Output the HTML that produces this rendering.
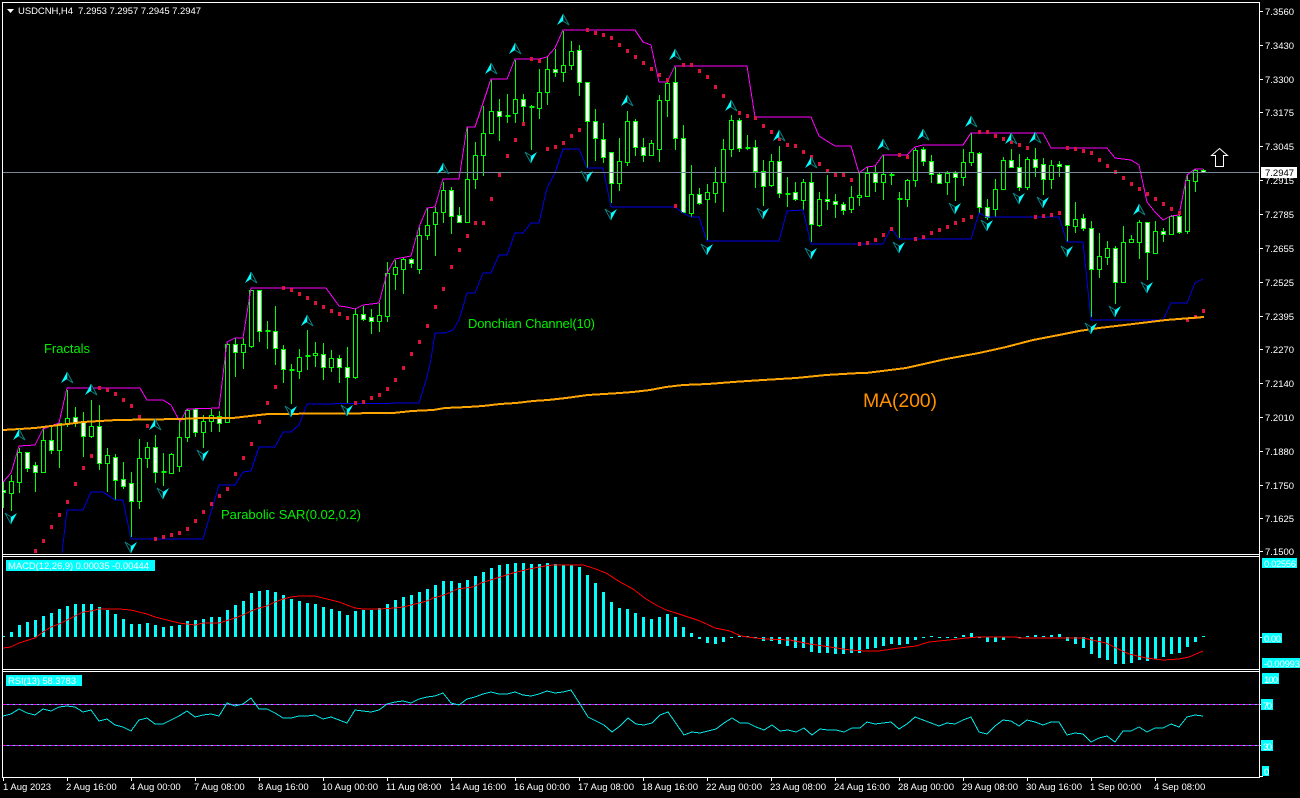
<!DOCTYPE html>
<html><head><meta charset="utf-8"><title>USDCNH,H4</title>
<style>
html,body{margin:0;padding:0;background:#000;width:1300px;height:798px;overflow:hidden}
svg{display:block;position:absolute;left:0;top:0}
text{font-family:"Liberation Sans",sans-serif;fill:#fff;font-size:9.5px;white-space:pre}
.g{fill:#00f000;font-size:13px}
.a{font-size:9.4px}
.l path,.l polyline,.l line{shape-rendering:crispEdges}
polyline{fill:none}
</style></head><body>
<svg width="1300" height="798" viewBox="0 0 1300 798" xmlns="http://www.w3.org/2000/svg">
<defs>
<clipPath id="m"><rect x="3" y="3" width="1256" height="551"/></clipPath>
<g id="u"><path d="M0 -6L6 5L0 1Z" fill="#000" stroke="#0b7f7f" stroke-width="1"/><path d="M0 -6L-6 5L0 1Z" fill="#00ffff"/></g>
<g id="d"><path d="M0 6L-6 -5L0 -1Z" fill="#000" stroke="#0b7f7f" stroke-width="1"/><path d="M0 6L6 -5L0 -1Z" fill="#00ffff"/></g>
</defs>
<rect width="1300" height="798" fill="#000"/>
<g class="l">
<g clip-path="url(#m)">
<!-- wicks -->
<path stroke="#00ff00" fill="none" d="M3.5 482V508M11.5 475V511M19.5 448V493M27.5 452V472M35.5 462V492M43.5 428V473M51.5 427V454M59.5 423V468M67.5 390V427M75.5 407V427M83.5 412V457M91.5 400V438M99.5 405V470M107.5 448V492M115.5 454V500M123.5 462V489M131.5 472V537M139.5 439V509M147.5 442V468M155.5 435V483M163.5 453V486M171.5 453V473M179.5 420V472M187.5 409V442M195.5 408V437M203.5 415V448M211.5 409V432M219.5 411V432M227.5 343V422M235.5 338V377M243.5 338V369M251.5 290V348M259.5 290V342M267.5 321V349M275.5 306V365M283.5 345V383M291.5 364V404M299.5 349V379M307.5 330V370M315.5 342V367M323.5 343V380M331.5 350V372M339.5 355V383M347.5 347V403M355.5 308V379M363.5 306V321M371.5 309V334M379.5 303V332M387.5 262V322M395.5 260V290M403.5 257V294M411.5 258V268M419.5 227V274M427.5 208V240M435.5 207V256M443.5 182V223M451.5 187V234M459.5 207V223M467.5 127V223M475.5 142V189M483.5 106V176M491.5 80V133M499.5 99V141M507.5 94V123M515.5 60V123M523.5 94V123M531.5 105V150M539.5 69V119M547.5 57V105M555.5 49V77M563.5 31V82M571.5 41V70M579.5 45V96M587.5 82V168M595.5 109V161M603.5 123V163M611.5 152V203M619.5 138V191M627.5 111V166M635.5 119V156M643.5 138V162M651.5 140V155M659.5 95V162M667.5 78V117M675.5 67V150M683.5 125V213M691.5 165V217M699.5 188V205M707.5 184V240M715.5 167V203M723.5 139V212M731.5 115V157M739.5 118V152M747.5 135V150M755.5 140V188M763.5 160V206M771.5 154V187M779.5 146V198M787.5 177V207M795.5 182V201M803.5 179V210M811.5 173V242M819.5 192V227M827.5 175V210M835.5 194V218M843.5 202V215M851.5 186V213M859.5 173V206M867.5 167V197M875.5 166V192M883.5 155V200M891.5 173V185M899.5 192V238M907.5 179V207M915.5 148V187M923.5 147V166M931.5 155V183M939.5 172V183M947.5 171V195M955.5 171V201M963.5 149V186M971.5 133V166M979.5 152V213M987.5 199V220M995.5 179V217M1003.5 157V190M1011.5 149V167M1019.5 154V191M1027.5 157V190M1035.5 148V177M1043.5 158V195M1051.5 160V189M1059.5 161V177M1067.5 165V242M1075.5 202V233M1083.5 214V231M1091.5 221V317M1099.5 233V278M1107.5 241V265M1115.5 246V304M1123.5 226V282M1131.5 235V243M1139.5 220V259M1147.5 222V280M1155.5 221V254M1163.5 228V242M1171.5 215V235M1179.5 215V234M1187.5 175V234M1195.5 169V192M1203.5 169V173"/>
<!-- dojis -->
<path stroke="#00ff00" stroke-width="2" fill="none" d="M161.5 472h5M265.5 331h5M289.5 370h5M305.5 356h5M505.5 116h5M529.5 107h5M745.5 148h5M785.5 194h5M889.5 175h5M897.5 199h5"/>
<!-- hollow -->
<path stroke="#00ff00" fill="#000" d="M9.5 481.5h4v12h-4zM17.5 452.5h4v30h-4zM41.5 440.5h4v32h-4zM57.5 423.5h4v27h-4zM65.5 418.5h4v6h-4zM89.5 426.5h4v10h-4zM105.5 455.5h4v8h-4zM137.5 458.5h4v43h-4zM145.5 447.5h4v11h-4zM169.5 454.5h4v19h-4zM177.5 437.5h4v29h-4zM185.5 410.5h4v27h-4zM201.5 421.5h4v11h-4zM209.5 415.5h4v6h-4zM225.5 344.5h4v78h-4zM241.5 344.5h4v8h-4zM249.5 290.5h4v56h-4zM297.5 357.5h4v14h-4zM313.5 353.5h4v2h-4zM329.5 358.5h4v9h-4zM353.5 314.5h4v63h-4zM377.5 315.5h4v6h-4zM385.5 273.5h4v43h-4zM393.5 267.5h4v7h-4zM401.5 259.5h4v10h-4zM417.5 235.5h4v34h-4zM425.5 225.5h4v10h-4zM433.5 212.5h4v12h-4zM441.5 190.5h4v22h-4zM465.5 179.5h4v43h-4zM473.5 155.5h4v24h-4zM481.5 133.5h4v22h-4zM489.5 111.5h4v22h-4zM513.5 99.5h4v14h-4zM537.5 92.5h4v16h-4zM545.5 69.5h4v23h-4zM561.5 65.5h4v7h-4zM569.5 51.5h4v14h-4zM617.5 161.5h4v22h-4zM625.5 121.5h4v41h-4zM649.5 143.5h4v12h-4zM657.5 100.5h4v49h-4zM665.5 83.5h4v17h-4zM689.5 194.5h4v19h-4zM705.5 192.5h4v7h-4zM713.5 182.5h4v11h-4zM721.5 149.5h4v33h-4zM729.5 120.5h4v29h-4zM769.5 161.5h4v24h-4zM801.5 182.5h4v18h-4zM817.5 199.5h4v26h-4zM849.5 197.5h4v12h-4zM857.5 195.5h4v2h-4zM865.5 173.5h4v23h-4zM881.5 174.5h4v8h-4zM905.5 180.5h4v19h-4zM913.5 150.5h4v30h-4zM945.5 173.5h4v9h-4zM961.5 162.5h4v15h-4zM969.5 152.5h4v10h-4zM993.5 189.5h4v20h-4zM1001.5 160.5h4v29h-4zM1025.5 159.5h4v28h-4zM1049.5 165.5h4v14h-4zM1073.5 219.5h4v7h-4zM1097.5 256.5h4v13h-4zM1105.5 248.5h4v9h-4zM1121.5 242.5h4v40h-4zM1129.5 239.5h4v3h-4zM1137.5 222.5h4v20h-4zM1153.5 231.5h4v22h-4zM1169.5 216.5h4v18h-4zM1185.5 180.5h4v51h-4zM1193.5 170.5h4v11h-4z"/>
<!-- filled -->
<path stroke="#00ff00" fill="#fff" d="M1.5 490.5h4v2h-4zM25.5 452.5h4v16h-4zM33.5 465.5h4v7h-4zM49.5 440.5h4v10h-4zM73.5 417.5h4v6h-4zM81.5 422.5h4v14h-4zM97.5 426.5h4v37h-4zM113.5 457.5h4v23h-4zM121.5 479.5h4v7h-4zM129.5 483.5h4v18h-4zM153.5 447.5h4v25h-4zM193.5 409.5h4v23h-4zM217.5 416.5h4v7h-4zM233.5 344.5h4v8h-4zM257.5 290.5h4v41h-4zM273.5 331.5h4v17h-4zM281.5 349.5h4v20h-4zM321.5 354.5h4v13h-4zM337.5 358.5h4v9h-4zM345.5 367.5h4v10h-4zM361.5 314.5h4v5h-4zM369.5 317.5h4v4h-4zM409.5 259.5h4v4h-4zM449.5 190.5h4v26h-4zM457.5 215.5h4v7h-4zM497.5 111.5h4v5h-4zM521.5 99.5h4v7h-4zM553.5 69.5h4v3h-4zM577.5 50.5h4v32h-4zM585.5 82.5h4v39h-4zM593.5 121.5h4v17h-4zM601.5 139.5h4v18h-4zM609.5 152.5h4v31h-4zM633.5 121.5h4v26h-4zM641.5 147.5h4v8h-4zM673.5 82.5h4v56h-4zM681.5 138.5h4v74h-4zM697.5 194.5h4v9h-4zM737.5 120.5h4v28h-4zM753.5 147.5h4v24h-4zM761.5 171.5h4v15h-4zM777.5 161.5h4v32h-4zM793.5 192.5h4v7h-4zM809.5 182.5h4v42h-4zM825.5 199.5h4v2h-4zM833.5 201.5h4v3h-4zM841.5 204.5h4v6h-4zM873.5 173.5h4v9h-4zM921.5 149.5h4v12h-4zM929.5 161.5h4v13h-4zM937.5 174.5h4v9h-4zM953.5 173.5h4v4h-4zM977.5 153.5h4v54h-4zM985.5 207.5h4v10h-4zM1009.5 160.5h4v7h-4zM1017.5 167.5h4v20h-4zM1033.5 159.5h4v8h-4zM1041.5 164.5h4v15h-4zM1057.5 164.5h4v2h-4zM1065.5 165.5h4v60h-4zM1081.5 218.5h4v10h-4zM1089.5 228.5h4v41h-4zM1113.5 248.5h4v34h-4zM1145.5 222.5h4v30h-4zM1161.5 231.5h4v3h-4zM1177.5 216.5h4v16h-4zM1201.5 170.5h4v2h-4z"/>
<!-- donchian lower -->
<polyline stroke="#0000e6" points="62,553 67,510 83,510 91,492 103,492 115,500 123,500 131,539 203,539 219,485 235,485 243,472 251,471 259,447 275,447 283,432 291,432 299,425 307,404 419,403 427,377 431,359 435,333 445,333 453,330 459,320 467,293 475,293 483,273 491,273 499,255 507,255 515,233 523,233 531,223 539,223 547,188 555,173 563,149 579,149 587,168 603,168 611,207 675,207 683,213 691,217 699,217 707,241 779,241 787,211 803,210 811,244 883,244 891,228 899,239 971,239 979,213 987,217 1059,217 1067,242 1083,242 1091,320 1163,320 1171,303 1187,303 1195,283 1203,279"/>
<!-- donchian upper -->
<polyline stroke="#ff00ff" points="3,482 11,473 19,446 35,445 43,429 51,426 59,423 67,388 140,388 147,400 163,400 171,405 180,422 187,409 219,408 227,342 235,338 243,338 251,288 326,288 339,306 347,307 355,309 363,305 379,303 387,273 395,259 411,256 419,227 427,208 435,207 443,179 459,179 467,127 475,127 491,79 507,79 515,59 539,59 547,57 555,48 563,30 635,30 643,42 651,45 659,82 667,82 675,66 747,66 755,117 803,117 811,117 819,136 835,146 851,146 859,173 867,167 875,166 883,155 907,155 915,147 923,145 963,145 971,133 1043,133 1051,148 1107,148 1115,158 1131,160 1139,165 1147,202 1155,212 1163,220 1171,216 1179,215 1187,175 1195,169 1203,169"/>
<!-- SAR -->
<path stroke="#dc143c" stroke-width="3" fill="none" d="M35.5 549v4M43.5 539v4M51.5 525v4M59.5 513v4M67.5 500v4M75.5 482v4M83.5 466v4M91.5 454v4M99.5 386v4M107.5 388v4M115.5 392v4M123.5 398v4M131.5 404v4M139.5 415v4M147.5 424v4M155.5 537v4M163.5 535v4M171.5 533v4M179.5 531v4M187.5 527v4M195.5 519v4M203.5 510v4M211.5 502v4M219.5 494v4M227.5 487v4M235.5 472v4M243.5 456v4M251.5 442v4M259.5 420v4M267.5 401v4M275.5 385v4M283.5 286v4M291.5 288v4M299.5 292v4M307.5 296v4M315.5 301v4M323.5 305v4M331.5 309v4M339.5 312v4M347.5 316v4M355.5 401v4M363.5 400v4M371.5 396v4M379.5 393v4M387.5 387v4M395.5 378v4M403.5 366v4M411.5 352v4M419.5 340v4M427.5 324v4M435.5 305v4M443.5 287v4M451.5 265v4M459.5 248v4M467.5 234v4M475.5 221v4M483.5 221v4M491.5 197v4M499.5 173v4M507.5 154v4M515.5 138v4M523.5 122v4M531.5 57v4M539.5 59v4M547.5 147v4M555.5 145v4M563.5 141v4M571.5 134v4M579.5 128v4M587.5 28v4M595.5 31v4M603.5 33v4M611.5 36v4M619.5 43v4M627.5 49v4M635.5 55v4M643.5 61v4M651.5 67v4M659.5 73v4M667.5 78v4M675.5 204v4M683.5 63v4M691.5 63v4M699.5 69v4M707.5 75v4M715.5 85v4M723.5 94v4M731.5 103v4M739.5 111v4M747.5 114v4M755.5 116v4M763.5 124v4M771.5 130v4M779.5 137v4M787.5 143v4M795.5 144v4M803.5 150v4M811.5 155v4M819.5 162v4M827.5 169v4M835.5 173v4M843.5 173v4M851.5 178v4M859.5 242v4M867.5 241v4M875.5 238v4M883.5 233v4M891.5 227v4M899.5 153v4M907.5 155v4M915.5 237v4M923.5 235v4M931.5 231v4M939.5 228v4M947.5 225v4M955.5 221v4M963.5 218v4M971.5 215v4M979.5 130v4M987.5 130v4M995.5 134v4M1003.5 137v4M1011.5 140v4M1019.5 143v4M1027.5 146v4M1035.5 215v4M1043.5 214v4M1051.5 213v4M1059.5 211v4M1067.5 146v4M1075.5 147v4M1083.5 149v4M1091.5 151v4M1099.5 158v4M1107.5 164v4M1115.5 170v4M1123.5 176v4M1131.5 182v4M1139.5 187v4M1147.5 192v4M1155.5 197v4M1163.5 202v4M1171.5 207v4M1179.5 211v4M1187.5 318v4M1195.5 315v4M1203.5 309v4"/>
<!-- MA -->
<polyline stroke="#ffa500" stroke-width="2" points="3,430 20,429 35,428 51,426 67,424 83,422 100,421 117,420 180,419 203,418 233,418 250,416 268,414 393,413 412,411 433,410 445,408 468,407 483,406 500,404 516,403 533,401 548,400 566,398 588,395 620,393 633,392 650,390 666,387 683,385 708,384 733,382 763,380 796,378 826,375 860,373 866,373 906,368 946,359 979,353 1006,347 1033,340 1059,335 1079,331 1099,328 1133,324 1166,320 1204,317"/>
<!-- current price line -->
<line x1="3" y1="172.5" x2="1259" y2="172.5" stroke="#778899"/>
</g>
</g>
<!-- fractals -->
<g clip-path="url(#m)">
<use href="#u" x="19" y="435"/><use href="#u" x="67" y="378"/><use href="#u" x="91" y="390"/><use href="#u" x="155" y="425"/><use href="#u" x="251" y="278"/><use href="#u" x="307" y="321"/><use href="#u" x="443" y="169"/><use href="#u" x="491" y="69"/><use href="#u" x="515" y="49"/><use href="#u" x="563" y="20"/><use href="#u" x="627" y="101"/><use href="#u" x="675" y="55"/><use href="#u" x="731" y="106"/><use href="#u" x="779" y="136"/><use href="#u" x="811" y="163"/><use href="#u" x="883" y="145"/><use href="#u" x="923" y="135"/><use href="#u" x="971" y="122"/><use href="#u" x="1011" y="139"/><use href="#u" x="1035" y="138"/><use href="#u" x="1139" y="210"/>
<use href="#d" x="11" y="518"/><use href="#d" x="131" y="547"/><use href="#d" x="163" y="493"/><use href="#d" x="203" y="455"/><use href="#d" x="291" y="411"/><use href="#d" x="347" y="410"/><use href="#d" x="531" y="157"/><use href="#d" x="587" y="176"/><use href="#d" x="611" y="214"/><use href="#d" x="707" y="249"/><use href="#d" x="763" y="213"/><use href="#d" x="811" y="253"/><use href="#d" x="899" y="247"/><use href="#d" x="955" y="208"/><use href="#d" x="987" y="225"/><use href="#d" x="1019" y="198"/><use href="#d" x="1043" y="202"/><use href="#d" x="1067" y="251"/><use href="#d" x="1091" y="328"/><use href="#d" x="1115" y="311"/><use href="#d" x="1147" y="287"/>
</g>
<!-- big arrow -->
<path d="M1219.5 148.5L1227.5 155.5H1223.5V166.5H1215.5V155.5H1211.5Z" fill="#000" stroke="#fff"/>
<g class="l">
<!-- MACD hist -->
<path stroke="#00ffff" stroke-width="3" fill="none" d="M3.5 636V637M11.5 632V637M19.5 625V637M27.5 622V637M35.5 620V637M43.5 616V637M51.5 613V637M59.5 609V637M67.5 606V637M75.5 604V637M83.5 604V637M91.5 604V637M99.5 607V637M107.5 610V637M115.5 614V637M123.5 619V637M131.5 624V637M139.5 624V637M147.5 623V637M155.5 625V637M163.5 627V637M171.5 626V637M179.5 625V637M187.5 621V637M195.5 620V637M203.5 619V637M211.5 617V637M219.5 617V637M227.5 610V637M235.5 605V637M243.5 601V637M251.5 593V637M259.5 591V637M267.5 590V637M275.5 592V637M283.5 595V637M291.5 599V637M299.5 601V637M307.5 603V637M315.5 604V637M323.5 607V637M331.5 609V637M339.5 611V637M347.5 615V637M355.5 611V637M363.5 610V637M371.5 610V637M379.5 608V637M387.5 604V637M395.5 600V637M403.5 597V637M411.5 595V637M419.5 592V637M427.5 589V637M435.5 585V637M443.5 581V637M451.5 581V637M459.5 583V637M467.5 580V637M475.5 576V637M483.5 572V637M491.5 568V637M499.5 565V637M507.5 564V637M515.5 563V637M523.5 563V637M531.5 564V637M539.5 564V637M547.5 563V637M555.5 564V637M563.5 565V637M571.5 565V637M579.5 567V637M587.5 575V637M595.5 583V637M603.5 592V637M611.5 602V637M619.5 608V637M627.5 609V637M635.5 613V637M643.5 617V637M651.5 619V637M659.5 617V637M667.5 614V637M675.5 617V637M683.5 627V637M691.5 633V637M699.5 637V639M707.5 637V643M715.5 637V644M723.5 637V642M731.5 637V638M739.5 636V637M747.5 636V637M755.5 637V638M763.5 637V641M771.5 637V641M779.5 637V644M787.5 637V646M795.5 637V648M803.5 637V648M811.5 637V652M819.5 637V653M827.5 637V653M835.5 637V654M843.5 637V654M851.5 637V653M859.5 637V653M867.5 637V649M875.5 637V648M883.5 637V646M891.5 637V644M899.5 637V645M907.5 637V644M915.5 637V640M923.5 637V638M931.5 636V637M939.5 637V638M947.5 637V638M955.5 637V638M963.5 635V637M971.5 633V637M979.5 637V638M987.5 637V642M995.5 637V642M1003.5 637V640M1019.5 637V638M1027.5 636V637M1035.5 635V637M1043.5 636V637M1051.5 635V637M1059.5 634V637M1067.5 637V641M1075.5 637V644M1083.5 637V648M1091.5 637V654M1099.5 637V658M1107.5 637V660M1115.5 637V664M1123.5 637V664M1131.5 637V663M1139.5 637V660M1147.5 637V661M1155.5 637V659M1163.5 637V657M1171.5 637V654M1179.5 637V653M1187.5 637V647M1195.5 637V642M1203.5 636V637"/>
<!-- MACD signal -->
<polyline stroke="#ff0000" points="3,648 11,647 19,643 35,638 43,632 51,627 59,624 67,620 75,616 83,612 91,611 99,609 107,609 119,609 131,610 139,612 147,614 155,617 163,619 171,621 179,623 195,625 203,623 219,623 235,618 243,615 251,611 259,608 267,606 275,602 283,599 291,597 299,596 315,596 323,598 331,600 339,602 347,605 355,608 363,609 379,609 395,608 403,607 419,603 427,601 433,598 441,596 449,593 457,589 473,587 481,583 497,578 513,573 529,569 545,566 553,565 583,565 593,568 606,573 620,582 633,589 646,599 656,605 666,610 676,613 685,616 700,621 715,628 730,631 741,636 755,638 766,639 790,640 810,644 830,647 850,650 866,651 879,651 899,648 916,646 929,642 949,640 966,638 979,637 1016,637 1019,638 1056,638 1083,638 1106,643 1116,648 1129,654 1146,658 1163,660 1179,659 1189,657 1203,651"/>
<!-- RSI levels -->
<line x1="3" y1="704.5" x2="1259" y2="704.5" stroke="#00ffff"/>
<line x1="3" y1="704.5" x2="1259" y2="704.5" stroke="#ff00ff" stroke-dasharray="4 2"/>
<line x1="3" y1="745.5" x2="1259" y2="745.5" stroke="#00ffff"/>
<line x1="3" y1="745.5" x2="1259" y2="745.5" stroke="#ff00ff" stroke-dasharray="4 2"/>
<!-- RSI -->
<polyline stroke="#00e8e8" points="3,716 11,714 19,709 27,713 35,715 43,709 51,711 59,707 67,706 75,707 83,712 91,710 99,721 107,719 115,725 123,727 131,731 139,720 147,718 155,724 163,724 171,720 179,716 187,711 195,717 203,715 211,714 219,716 227,703 235,706 243,704 251,698 259,709 267,709 275,713 283,718 291,718 299,716 307,716 315,715 323,719 331,717 339,720 347,723 355,710 363,711 371,712 379,710 387,704 395,702 403,701 411,703 419,699 427,697 435,696 443,693 451,703 459,705 467,699 475,697 483,694 491,692 499,694 507,694 515,692 523,695 531,696 539,694 547,691 555,693 563,692 571,690 580,704 588,717 596,721 604,725 612,732 620,726 628,718 636,724 644,725 652,723 660,715 668,712 684,735 692,732 700,733 708,731 716,729 724,723 732,718 740,723 748,723 756,727 764,730 772,725 780,731 788,730 796,732 804,728 812,735 820,729 828,730 836,730 844,732 852,728 860,728 867,722 875,724 883,723 891,722 899,729 907,724 915,717 923,720 931,723 939,726 947,723 955,724 963,720 971,717 979,732 987,734 995,726 1003,720 1011,721 1019,726 1027,720 1035,722 1043,725 1051,722 1059,722 1067,735 1075,733 1083,734 1091,742 1099,738 1107,736 1115,742 1123,731 1131,731 1139,727 1147,732 1155,728 1163,728 1171,724 1179,727 1187,717 1195,715 1203,716"/>
<!-- frames -->
<path stroke="#fff" fill="none" d="M2.5 2.5H1259.5V777.5H2.5ZM2.5 554.5H1259.5M2.5 556.5H1259.5M2.5 669.5H1259.5M2.5 671.5H1259.5"/>
<!-- right ticks -->
<path stroke="#fff" fill="none" d="M1260 11.5h3M1260 45.5h3M1260 79.5h3M1260 112.5h3M1260 146.5h3M1260 180.5h3M1260 214.5h3M1260 248.5h3M1260 282.5h3M1260 316.5h3M1260 349.5h3M1260 383.5h3M1260 417.5h3M1260 451.5h3M1260 485.5h3M1260 518.5h3M1260 551.5h3M1260 637.5h3M1260 704.5h3M1260 745.5h3M1260 776.5h3"/>
<!-- time ticks -->
<path stroke="#fff" fill="none" d="M3.5 778v3M67.5 778v3M131.5 778v3M195.5 778v3M259.5 778v3M323.5 778v3M387.5 778v3M451.5 778v3M515.5 778v3M579.5 778v3M643.5 778v3M707.5 778v3M771.5 778v3M835.5 778v3M899.5 778v3M963.5 778v3M1027.5 778v3M1091.5 778v3M1155.5 778v3"/>
<!-- label boxes -->
<path fill="#00ffff" d="M6 560h149v11H6zM6 675h76v11H6zM1262 558h35v10h-35zM1262 633h20v10h-20zM1262 658h38v10h-38zM1262 673h17v11h-17zM1261 699h12v11h-12zM1261 740h12v11h-12zM1262 766h7v10h-7z"/>
</g>
<!-- header -->
<path d="M7 9h7l-3.5 4z" fill="#fff"/>
<text x="18" y="14" textLength="183">USDCNH,H4  7.2953 7.2957 7.2945 7.2947</text>
<!-- price axis -->
<g class="a">
<text x="1265" y="15">7.3560</text><text x="1265" y="49">7.3430</text><text x="1265" y="83">7.3300</text><text x="1265" y="116">7.3175</text><text x="1265" y="150">7.3045</text><text x="1265" y="184">7.2915</text><text x="1265" y="218">7.2785</text><text x="1265" y="252">7.2655</text><text x="1265" y="286">7.2525</text><text x="1265" y="320">7.2395</text><text x="1265" y="353">7.2270</text><text x="1265" y="387">7.2140</text><text x="1265" y="421">7.2010</text><text x="1265" y="455">7.1880</text><text x="1265" y="489">7.1750</text><text x="1265" y="522">7.1625</text><text x="1265" y="555">7.1500</text>
</g>
<rect x="1261" y="167" width="36" height="11" fill="#fff"/>
<text x="1265" y="176" style="fill:#000">7.2947</text>
<!-- chart labels -->
<text class="g" x="44" y="353" textLength="46">Fractals</text>
<text class="g" x="221" y="519" textLength="140">Parabolic SAR(0.02,0.2)</text>
<text class="g" x="468" y="328" textLength="127">Donchian Channel(10)</text>
<text x="863" y="407" textLength="74" style="fill:#ff9000;font-size:19.5px">MA(200)</text>
<!-- indicator labels -->
<text x="8" y="569" textLength="141">MACD(12,26,9) 0.00035 -0.00444</text>
<text x="8" y="684" textLength="68">RSI(13) 58.3783</text>
<text x="1264" y="567" textLength="32">0.02556</text>
<text x="1264" y="642" textLength="17">0.00</text>
<text x="1264" y="667" textLength="36">-0.00993</text>
<text x="1264" y="683" textLength="14">100</text>
<text x="1263" y="709" textLength="9">70</text>
<text x="1263" y="750" textLength="9">30</text>
<text x="1264" y="775" textLength="5">0</text>
<!-- time axis -->
<text x="3" y="790">1 Aug 2023</text><text x="66" y="790">2 Aug 16:00</text><text x="130" y="790">4 Aug 00:00</text><text x="194" y="790">7 Aug 08:00</text><text x="258" y="790">8 Aug 16:00</text><text x="322" y="790">10 Aug 00:00</text><text x="386" y="790">11 Aug 08:00</text><text x="450" y="790">14 Aug 16:00</text><text x="514" y="790">16 Aug 00:00</text><text x="578" y="790">17 Aug 08:00</text><text x="642" y="790">18 Aug 16:00</text><text x="706" y="790">22 Aug 00:00</text><text x="770" y="790">23 Aug 08:00</text><text x="834" y="790">24 Aug 16:00</text><text x="898" y="790">28 Aug 00:00</text><text x="962" y="790">29 Aug 08:00</text><text x="1026" y="790">30 Aug 16:00</text><text x="1090" y="790">1 Sep 00:00</text><text x="1154" y="790">4 Sep 08:00</text>
</svg>
</body></html>
